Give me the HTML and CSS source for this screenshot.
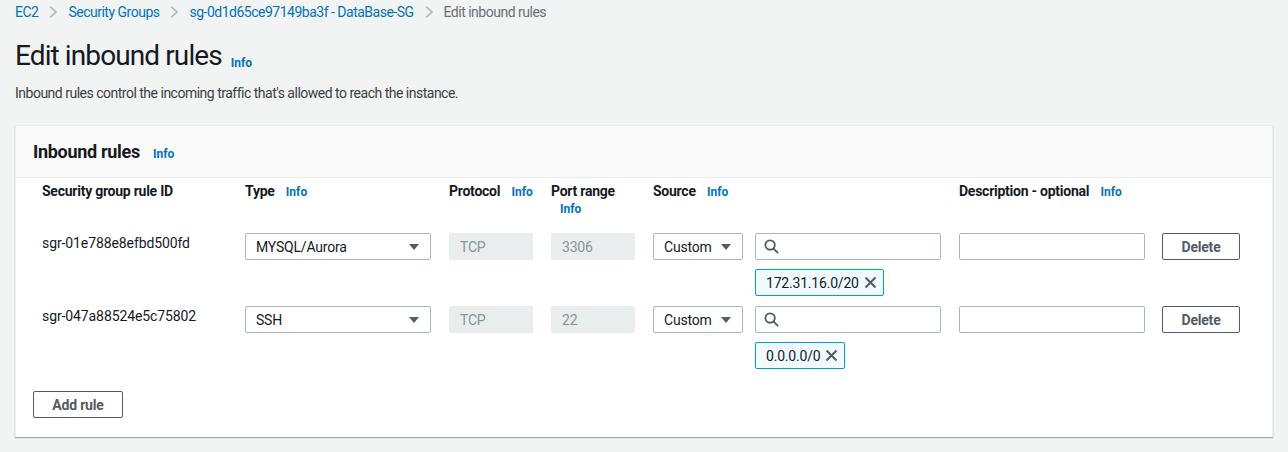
FILE: index.html
```html
<!DOCTYPE html>
<html lang="en">
<head>
<meta charset="utf-8">
<title>Edit inbound rules</title>
<link rel="stylesheet" href="styles.css">
</head>
<body>
<nav class="crumbs">
  <a class="crumb-link" href="#">EC2</a>
  <svg class="chev" width="10" height="14" viewBox="0 0 10 14"><path d="M2 1.5 L8 7 L2 12.5" fill="none" stroke="#aab7b8" stroke-width="1.6"/></svg>
  <a class="crumb-link" href="#">Security Groups</a>
  <svg class="chev" width="10" height="14" viewBox="0 0 10 14"><path d="M2 1.5 L8 7 L2 12.5" fill="none" stroke="#aab7b8" stroke-width="1.6"/></svg>
  <a class="crumb-link" href="#">sg-0d1d65ce97149ba3f - DataBase-SG</a>
  <svg class="chev" width="10" height="14" viewBox="0 0 10 14"><path d="M2 1.5 L8 7 L2 12.5" fill="none" stroke="#aab7b8" stroke-width="1.6"/></svg>
  <span class="crumb-current">Edit inbound rules</span>
</nav>

<header class="page-head">
  <h1 class="title">Edit inbound rules <a class="info" href="#">Info</a></h1>
  <p class="desc">Inbound rules control the incoming traffic that's allowed to reach the instance.</p>
</header>

<section class="panel">
  <div class="panel-head">
    <h2 class="panel-title">Inbound rules <a class="info" href="#">Info</a></h2>
  </div>
  <div class="panel-body">
    <div class="grid">
      <div class="th">Security group rule ID</div>
      <div class="th">Type <a class="info" href="#">Info</a></div>
      <div class="th">Protocol <a class="info" href="#">Info</a></div>
      <div class="th th-stack">Port range <a class="info" href="#">Info</a></div>
      <div class="th th-span2">Source <a class="info" href="#">Info</a></div>
      <div class="th">Description - optional <a class="info" href="#">Info</a></div>
      <div class="th"></div>

      <div class="cell id">sgr-01e788e8efbd500fd</div>
      <div class="cell"><div class="select w-type"><span>MYSQL/Aurora</span><span class="caret"></span></div></div>
      <div class="cell"><div class="input disabled w-small">TCP</div></div>
      <div class="cell"><div class="input disabled w-small">3306</div></div>
      <div class="cell"><div class="select w-src"><span>Custom</span><span class="caret"></span></div></div>
      <div class="cell stack">
        <div class="input search w-wide"><svg width="15" height="15" viewBox="0 0 16 16"><circle cx="6.5" cy="6.5" r="5" fill="none" stroke="#545b64" stroke-width="2"/><path d="M10.2 10.2 L14.5 14.5" stroke="#545b64" stroke-width="2" stroke-linecap="round"/></svg></div>
        <div class="token">172.31.16.0/20 <svg class="x" width="13" height="13" viewBox="0 0 13 13"><path d="M1.5 1.5 L11.5 11.5 M11.5 1.5 L1.5 11.5" stroke="#545b64" stroke-width="2"/></svg></div>
      </div>
      <div class="cell"><div class="input w-wide"></div></div>
      <div class="cell"><button class="btn w-del">Delete</button></div>

      <div class="cell id">sgr-047a88524e5c75802</div>
      <div class="cell"><div class="select w-type"><span>SSH</span><span class="caret"></span></div></div>
      <div class="cell"><div class="input disabled w-small">TCP</div></div>
      <div class="cell"><div class="input disabled w-small">22</div></div>
      <div class="cell"><div class="select w-src"><span>Custom</span><span class="caret"></span></div></div>
      <div class="cell stack">
        <div class="input search w-wide"><svg width="15" height="15" viewBox="0 0 16 16"><circle cx="6.5" cy="6.5" r="5" fill="none" stroke="#545b64" stroke-width="2"/><path d="M10.2 10.2 L14.5 14.5" stroke="#545b64" stroke-width="2" stroke-linecap="round"/></svg></div>
        <div class="token">0.0.0.0/0 <svg class="x" width="13" height="13" viewBox="0 0 13 13"><path d="M1.5 1.5 L11.5 11.5 M11.5 1.5 L1.5 11.5" stroke="#545b64" stroke-width="2"/></svg></div>
      </div>
      <div class="cell"><div class="input w-wide"></div></div>
      <div class="cell"><button class="btn w-del">Delete</button></div>
    </div>
    <button class="btn add">Add rule</button>
  </div>
</section>
</body>
</html>
```

FILE: styles.css
```css
* { box-sizing: border-box; }
html, body { margin: 0; padding: 0; }
body {
  background: #f2f3f3;
  font-family: Roboto, "Liberation Sans", Arial, sans-serif;
  font-size: 14px;
  color: #16191f;
  padding: 0 15px;
  height: 452px;
  overflow: hidden;
}
a { text-decoration: none; }

.crumbs {
  display: flex;
  align-items: center;
  height: 24px;
  font-size: 14px;
  line-height: 24px;
  letter-spacing: -0.5px;
}
.crumb-link { color: #0073bb; }
.chev { margin: 0 10px; }
.crumb-current { color: #687078; }

.page-head { padding-top: 16px; }
.title {
  margin: 0;
  font-size: 28px;
  font-weight: 400;
  line-height: 32px;
  letter-spacing: -0.9px;
  display: flex;
  align-items: baseline;
}
.info {
  color: #0073bb;
  font-size: 12px;
  font-weight: 700;
  letter-spacing: 0;
}
.title .info { margin-left: 9px; position: relative; top: 2px; }
.desc {
  margin: 6px 0 0 0;
  font-size: 14px;
  line-height: 20px;
  color: #3a3f45;
  letter-spacing: -0.5px;
}

.panel {
  margin-top: 22px;
  background: #fff;
  border: 1px solid #eaeded;
  border-bottom: none;
  box-shadow: 0 1px 1px 0 rgba(0, 28, 36, 0.35);
  height: 312px;
}
.panel-head {
  background: #fafafa;
  border-bottom: 1px solid #eaeded;
  height: 52px;
  padding: 0 17px;
  display: flex;
  align-items: center;
}
.panel-title {
  margin: 0;
  font-size: 18px;
  font-weight: 700;
  letter-spacing: -0.3px;
  display: flex;
  align-items: baseline;
}
.panel-title .info { margin-left: 13px; }

.panel-body { padding: 3px 17px 0 17px; }
.grid {
  display: grid;
  grid-template-columns: 203px 204px 102px 102px 102px 204px 203px auto;
  padding-left: 9px;
}
.th {
  font-weight: 700;
  font-size: 14px;
  line-height: 20px;
  letter-spacing: -0.25px;
  padding-bottom: 15px;
}
.th .info { margin-left: 8px; }
.th-stack { display: flex; flex-direction: column; align-items: flex-start; }
.th-stack .info { margin-left: 9px; margin-top: -1px; line-height: 18px; }
.th-span2 { grid-column: span 2; }

.cell { padding-bottom: 10px; }
.cell.id { line-height: 20px; letter-spacing: -0.1px; }
.stack { display: flex; flex-direction: column; align-items: flex-start; gap: 9px; }

.select, .input {
  height: 27px;
  border: 1px solid #aab7b8;
  border-radius: 2px;
  background: #fff;
  display: flex;
  align-items: center;
  padding: 0 10px;
  font-size: 14px;
  letter-spacing: -0.2px;
}
.select { justify-content: space-between; }
.caret {
  width: 0; height: 0;
  border-left: 5px solid transparent;
  border-right: 5px solid transparent;
  border-top: 6px solid #545b64;
  margin-right: 1px;
}
.disabled {
  background: #eaeded;
  border-color: #eaeded;
  color: #879596;
}
.search svg { margin-left: -2px; }
.w-type { width: 186px; }
.w-small { width: 84px; }
.w-src { width: 90px; }
.w-wide { width: 186px; }
.w-del { width: 78px; }

.token {
  height: 27px;
  border: 1px solid #00a1c9;
  background: #f1faff;
  border-radius: 2px;
  display: flex;
  align-items: center;
  padding: 0 6px 0 10px;
  font-size: 14px;
  letter-spacing: -0.2px;
  gap: 5px;
}

.btn {
  height: 27px;
  border: 1px solid #545b64;
  border-radius: 2px;
  background: #fff;
  color: #545b64;
  font-family: inherit;
  font-weight: 700;
  font-size: 14px;
  letter-spacing: -0.2px;
  padding: 0;
}
.add { width: 90px; margin-top: 12px; }
```
